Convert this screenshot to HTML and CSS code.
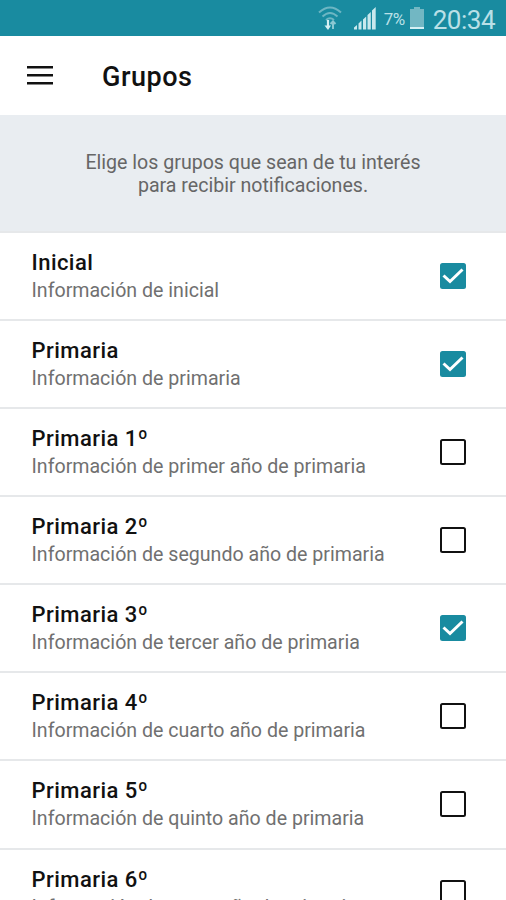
FILE: index.html
```html
<!DOCTYPE html>
<html lang="es">
<head>
<meta charset="utf-8">
<title>Grupos</title>
<link rel="stylesheet" href="styles.css">
</head>
<body>
<div class="status">
  <svg class="wifi" width="26" height="26" viewBox="0 0 26 26" fill="none" stroke="#6db6c3" stroke-width="2">
    <path d="M2 7.500Q13-2.500 24 7.500M5.500 11.500Q13 4.500 20.500 11.500M9 15Q13 11.500 17 15"/>
    <path d="M11 15V23" stroke="#d6f0f4" stroke-width="2.200"/>
    <path d="M7.500 20.500h6.500L11 25z" fill="#d6f0f4" stroke="none"/>
    <path d="M16 24V17M13.500 19l2.500-2.500 2.500 2.500" stroke="#8bc8d2"/>
  </svg>
  <svg class="signal" width="24" height="24" viewBox="0 0 24 24" fill="#c9e8ed">
    <path d="M1 23.500v-2l3-2.500v4.500zM5.500 23.500v-6l3-3v9zM10 23.500v-10l3.200-3v13zM14.500 23.500V9l3.300-3v17.500zM19 23.500V4.500L22.700 1v22.500z"/>
  </svg>
  <span class="percent">7%</span>
  <svg class="battery" width="14" height="22" viewBox="0 0 14 22"><path fill="#72b7c3" d="M4 0h6v2h4v20H0V2h4z"/><path fill="#d6f0f4" d="M0 20h14v2H0z"/></svg>
  <span class="clock">20:34</span>
</div>
<header class="bar">
  <svg width="26" height="19" viewBox="0 0 26 19" fill="#111"><path d="M0 0h26v2.500H0zM0 8h26v2.500H0zM0 16h26v2.500H0z"/></svg>
  <h1 class="heading">Grupos</h1>
</header>
<p class="intro">Elige los grupos que sean de tu interés<br>para recibir notificaciones.</p>
<ul class="list">
  <li class="row"><div><div class="name">Inicial</div><div class="desc">Información de inicial</div></div><span class="box on"><svg width="26" height="26" viewBox="0 0 26 26"><path d="M3.500 12.500l6.500 6L22.500 6.500"/></svg></span></li>
  <li class="row"><div><div class="name">Primaria</div><div class="desc">Información de primaria</div></div><span class="box on"><svg width="26" height="26" viewBox="0 0 26 26"><path d="M3.500 12.500l6.500 6L22.500 6.500"/></svg></span></li>
  <li class="row"><div><div class="name">Primaria 1º</div><div class="desc">Información de primer año de primaria</div></div><span class="box"></span></li>
  <li class="row"><div><div class="name">Primaria 2º</div><div class="desc">Información de segundo año de primaria</div></div><span class="box"></span></li>
  <li class="row"><div><div class="name">Primaria 3º</div><div class="desc">Información de tercer año de primaria</div></div><span class="box on"><svg width="26" height="26" viewBox="0 0 26 26"><path d="M3.500 12.500l6.500 6L22.500 6.500"/></svg></span></li>
  <li class="row"><div><div class="name">Primaria 4º</div><div class="desc">Información de cuarto año de primaria</div></div><span class="box"></span></li>
  <li class="row"><div><div class="name">Primaria 5º</div><div class="desc">Información de quinto año de primaria</div></div><span class="box"></span></li>
  <li class="row"><div><div class="name">Primaria 6º</div><div class="desc">Información de sexto año de primaria</div></div><span class="box"></span></li>
</ul>
</body>
</html>
```
FILE: styles.css
```css
* { box-sizing: border-box; }
html, body { height: 900px; overflow: hidden; }
body { margin: 0; background: #fff; font-family: Roboto, sans-serif; color: #111; }
svg { display: block; flex: none; }
.status { height: 36px; background: #198ba0; display: flex; align-items: center; justify-content: flex-end; padding-right: 11px; color: #b9e0e7; }
.wifi { margin-right: 10px; }
.signal { margin-right: 7px; }
.percent { font-size: 17px; width: 22px; margin-right: 4px; letter-spacing: -.5px; padding-top: 2px; }
.battery { margin-right: 9px; }
.clock { font-size: 26px; line-height: 36px; padding-top: 3px; letter-spacing: -.5px; }
.bar { height: 79px; display: flex; align-items: center; padding-left: 27px; }
.heading { margin: 2px 0 0 49px; font-size: 27px; font-weight: 500; line-height: 36px; letter-spacing: .5px; }
.intro { margin: 0; height: 116px; background: #e9edf1; text-align: center; padding-top: 36px; font-size: 19.6px; line-height: 23px; color: #666; }
.list { list-style: none; margin: 0; padding: 0; }
.row { height: 88.08px; border-top: 2px solid #e6e8ea; display: flex; justify-content: space-between; align-items: flex-start; padding: 16px 40px 0 31.500px; }
.name { font-size: 22px; font-weight: 500; line-height: 27px; letter-spacing: .45px; white-space: nowrap; }
.desc { font-size: 19.6px; line-height: 30px; color: #707070; white-space: nowrap; }
.box { flex: none; width: 26px; height: 26px; margin-top: 14px; border: 2.500px solid #111; border-radius: 2.500px; }
.on { border: 0; background: #198ba0; }
.on path { fill: none; stroke: #fff; stroke-width: 3; }
```
